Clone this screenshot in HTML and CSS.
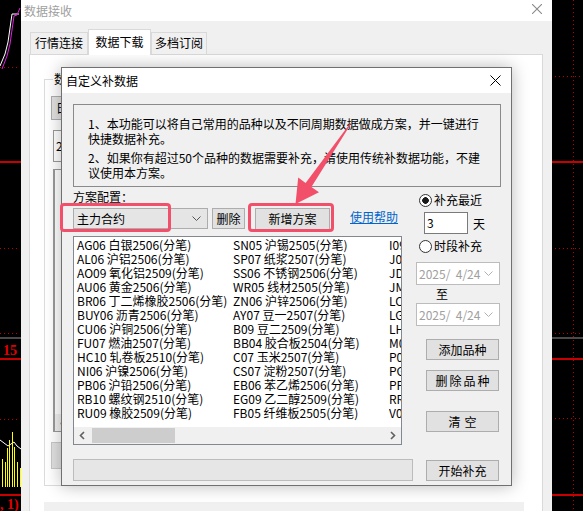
FILE: index.html
```html
<!DOCTYPE html>
<html lang="zh-CN">
<head>
<meta charset="utf-8">
<title>自定义补数据</title>
<link rel="stylesheet" href="styles.css">
</head>
<body>
<div class="desktop">
  <svg class="chart" width="583" height="511" viewBox="0 0 583 511">
    <g fill="none">
      <polyline points="0,66 5,54 8,42 12,14 19,14" stroke="#ffffff"/>
      <polyline points="2,69 7,56 10,44 14,16 17,15 20,8" stroke="#e020e0"/>
      <g stroke="#c00000" stroke-dasharray="1 3">
        <line x1="0" y1="67.5" x2="20" y2="67.5"/>
        <line x1="0" y1="248.5" x2="20" y2="248.5"/>
        <line x1="0" y1="333.5" x2="20" y2="333.5"/>
        <line x1="0" y1="419.5" x2="20" y2="419.5"/>
        <line x1="555" y1="76.5" x2="583" y2="76.5"/>
        <line x1="555" y1="248.5" x2="583" y2="248.5"/>
        <line x1="555" y1="333.5" x2="583" y2="333.5"/>
        <line x1="555" y1="418.5" x2="583" y2="418.5"/>
        <line x1="573.5" y1="0" x2="573.5" y2="511"/>
      </g>
      <g stroke="#c80000" stroke-width="2">
        <line x1="0" y1="162" x2="21" y2="162"/>
        <line x1="552" y1="162" x2="583" y2="162"/>
        <line x1="0" y1="359" x2="21" y2="359"/>
        <line x1="552" y1="359" x2="583" y2="359"/>
        <line x1="0" y1="495" x2="21" y2="495"/>
        <line x1="552" y1="495" x2="583" y2="495"/>
      </g>
      <g stroke="#4a4a4a" stroke-width="2">
        <line x1="0" y1="338" x2="21" y2="338"/>
        <line x1="552" y1="338" x2="583" y2="338"/>
      </g>
      <polyline points="0,440 4,443 8,446 11,444 14,442 17,446 21,449" stroke="#ffffff"/>
      <path d="M2.5 487V459 M5.5 487V462 M7.5 487V448 M9.5 487V440 M12.5 487V432 M14.5 487V447 M17.5 487V462 M20.5 487V468" stroke="#ffff00"/>
    </g>
    <text x="3" y="355" class="chart-num">15</text>
    <text x="0" y="509" class="chart-num">, 1)</text>
  </svg>

  <div class="backwin">
    <div class="bw-title">
      <span>数据接收</span>
      <svg class="bw-close" width="10" height="10" viewBox="0 0 10 10"><path d="M0 0L10 10M10 0L0 10" stroke="#8a8a8a" stroke-width="1.1"/></svg>
    </div>
    <div class="bw-tabs">
      <div class="tab t1">行情连接</div>
      <div class="tab t2 active">数据下载</div>
      <div class="tab t3">多档订阅</div>
    </div>
    <div class="bw-panel">
      <div class="groupbox">
        <span class="legend">数据</span>
        <div class="gb-btn">日线</div>
        <div class="gb-field">2025</div>
        <div class="gb-list"><div class="gb-scroll">‹</div></div>
        <div class="gb-btn2"></div>
      </div>
      <div class="statusbar"></div>
    </div>
  </div>

  <div class="dialog">
    <div class="dlg-title">
      <span>自定义补数据</span>
      <svg class="dlg-close" width="11" height="11" viewBox="0 0 11 11"><path d="M0.5 0.5L10.5 10.5M10.5 0.5L0.5 10.5" stroke="#000" stroke-width="1"/></svg>
    </div>
    <div class="dlg-body">
      <div class="info">
        <p>1、本功能可以将自己常用的品种以及不同周期数据做成方案，并一键进行快捷数据补充。</p>
        <p>2、如果你有超过50个品种的数据需要补充，请使用传统补数据功能，不建议使用本方案。</p>
      </div>
      <div class="main">
        <div class="left">
          <div class="label">方案配置：</div>
          <div class="combo-row">
            <div class="combo"><span>主力合约</span>
              <svg width="9" height="5" viewBox="0 0 9 5"><path d="M0.5 0.5L4.5 4.5L8.5 0.5" fill="none" stroke="#555"/></svg>
            </div>
            <div class="btn btn-del">删除</div>
            <div class="btn btn-new">新增方案</div>
            <span class="link">使用帮助</span>
          </div>
          <div class="list">
            <div class="cols">
              <span>AG06 白银2506(分笔)</span>
              <span>AL06 沪铝2506(分笔)</span>
              <span>AO09 氧化铝2509(分笔)</span>
              <span>AU06 黄金2506(分笔)</span>
              <span>BR06 丁二烯橡胶2506(分笔)</span>
              <span>BUY06 沥青2506(分笔)</span>
              <span>CU06 沪铜2506(分笔)</span>
              <span>FU07 燃油2507(分笔)</span>
              <span>HC10 轧卷板2510(分笔)</span>
              <span>NI06 沪镍2506(分笔)</span>
              <span>PB06 沪铅2506(分笔)</span>
              <span>RB10 螺纹钢2510(分笔)</span>
              <span>RU09 橡胶2509(分笔)</span>
              <span>SN05 沪锡2505(分笔)</span>
              <span>SP07 纸浆2507(分笔)</span>
              <span>SS06 不锈钢2506(分笔)</span>
              <span>WR05 线材2505(分笔)</span>
              <span>ZN06 沪锌2506(分笔)</span>
              <span>AY07 豆一2507(分笔)</span>
              <span>B09 豆二2509(分笔)</span>
              <span>BB04 胶合板2504(分笔)</span>
              <span>C07 玉米2507(分笔)</span>
              <span>CS07 淀粉2507(分笔)</span>
              <span>EB06 苯乙烯2506(分笔)</span>
              <span>EG09 乙二醇2509(分笔)</span>
              <span>FB05 纤维板2505(分笔)</span>
              <span class="clip">I09</span>
              <span class="clip">J09</span>
              <span class="clip">JD06</span>
              <span class="clip">JM09</span>
              <span class="clip">LC07</span>
              <span class="clip">LG07</span>
              <span class="clip">LH09</span>
              <span class="clip">M09</span>
              <span class="clip">P09</span>
              <span class="clip">PG06</span>
              <span class="clip">PP09</span>
              <span class="clip">RR07</span>
              <span class="clip">V09</span>
            </div>
            <div class="hscroll">
              <svg class="arr" width="17" height="15" viewBox="0 0 17 15"><path d="M10 4L6.5 7.5L10 11" fill="none" stroke="#606060" stroke-width="1.6"/></svg>
              <div class="thumb"></div>
              <svg class="arr arr-r" width="17" height="15" viewBox="0 0 17 15"><path d="M7 4L10.5 7.5L7 11" fill="none" stroke="#606060" stroke-width="1.6"/></svg>
            </div>
          </div>
        </div>
        <div class="right">
          <div class="radio checked"><i></i><span>补充最近</span></div>
          <div class="days"><div class="input">3</div><span>天</span></div>
          <div class="radio r2"><i></i><span>时段补充</span></div>
          <div class="date d1"><span>2025/  4/24</span>
            <svg width="9" height="5" viewBox="0 0 9 5"><path d="M0.5 0.5L4.5 4.5L8.5 0.5" fill="none" stroke="#b0b0b0"/></svg>
          </div>
          <div class="to">至</div>
          <div class="date d2"><span>2025/  4/24</span>
            <svg width="9" height="5" viewBox="0 0 9 5"><path d="M0.5 0.5L4.5 4.5L8.5 0.5" fill="none" stroke="#b0b0b0"/></svg>
          </div>
          <div class="btn rbtn b-add">添加品种</div>
          <div class="btn rbtn b-del">删除品种</div>
          <div class="btn rbtn b-clear">清空</div>
        </div>
        <div class="progress"></div>
        <div class="btn rbtn b-start">开始补充</div>
      </div>
    </div>
  </div>

  <div class="mark mark-combo"></div>
  <div class="mark mark-new"></div>
  <svg class="arrow" width="583" height="511" viewBox="0 0 583 511">
    <polygon points="350.6,124.6 311.4,186.9 319,192.2 295.5,204 298.2,177.6 305.6,182.9 349.6,124" fill="#f2506a"/>
  </svg>
</div>
</body>
</html>
```

FILE: styles.css
```css
* { box-sizing: border-box; margin: 0; padding: 0; }
html, body { width: 583px; height: 511px; overflow: hidden; }
body {
  background: #000;
  font-family: "Noto Sans CJK SC", "Noto Sans", sans-serif;
  font-size: 12px;
  color: #000;
}
.desktop { position: relative; width: 583px; height: 511px; overflow: hidden; }
.chart { position: absolute; left: 0; top: 0; }
.chart-num { fill: #e00000; font-family: "Liberation Serif", serif; font-weight: bold; font-size: 14px; }

/* back window */
.backwin {
  position: absolute; left: 21px; top: 0; width: 531px; height: 511px;
  background: #f0f0f0;
}
.bw-title {
  height: 21px; background: #fff; display: flex; align-items: center;
  padding-left: 3px; color: #a0a0a0; line-height: 17px;
}
.bw-close { margin-left: auto; margin-right: 10px; margin-top: -4px; }
.bw-tabs {
  display: flex; align-items: flex-end; height: 25px;
  margin: 8px 0 0 9px; position: relative; z-index: 1;
}
.tab {
  height: 22px; border: 1px solid #d9d9d9; border-bottom: none;
  background: #f0f0f0; text-align: center; line-height: 20px;
}
.t1 { width: 58px; }
.t2 { width: 63px; }
.t3 { width: 56px; }
.tab.active { height: 26px; background: #fff; margin-bottom: -1px; line-height: 24px; }
.bw-panel {
  margin-left: 8px; width: 514px; height: 470px;
  background: #fff; border: 1px solid #d9d9d9;
}
.groupbox {
  position: relative; margin: 24px 0 0 14px; width: 463px; height: 407px;
  border: 1px solid #dcdcdc; padding-left: 6px;
}
.legend {
  position: absolute; left: 8px; top: -9px; background: #fff; padding: 0 1px; line-height: 16px;
}
.gb-btn {
  margin-top: 16px; width: 60px; height: 24px; background: #e1e1e1;
  border: 1px solid #adadad; line-height: 22px; padding-left: 4px;
}
.gb-field {
  margin: 10px 0 0 2px; width: 100px; height: 32px; border: 1px solid #9a9a9a;
  line-height: 30px; padding-left: 2px;
}
.gb-list {
  margin: 7px 0 0 2px; width: 200px; height: 263px; border: 1px solid #9a9a9a;
  border-left-width: 2px; display: flex; flex-direction: column; justify-content: flex-end;
}
.gb-scroll { height: 17px; background: #f0f0f0; color: #606060; padding-left: 5px; line-height: 16px; }
.gb-btn2 {
  margin-top: 10px; width: 60px; height: 27px; background: #e1e1e1; border: 1px solid #c8c8c8;
}
.statusbar { margin: 16px 0 0 14px; width: 480px; height: 20px; background: #f0f0f0; }

/* dialog */
.dialog {
  position: absolute; left: 61px; top: 67px; width: 451px; height: 419px;
  background: #f0f0f0; border: 1px solid #707070;
  box-shadow: 0 0 16px rgba(0, 0, 0, 0.28);
}
.dlg-title {
  height: 25px; background: #fff; display: flex; align-items: center; padding: 0 10px 0 4px;
}
.dlg-close { margin-left: auto; }
.dlg-body { padding: 11px 10px 0 11px; }
.info {
  width: 428px; height: 83px; border: 1px solid #8a8a8a;
  padding: 11px 16px 0 14px; line-height: 15px;
}
.info p + p { margin-top: 4px; }
.main {
  margin-top: 3px; display: grid;
  grid-template-columns: 340px 85px; grid-template-rows: 255px 22px;
  column-gap: 3px; row-gap: 14px;
}
.label { height: 14px; line-height: 14px; }
.combo-row { margin-top: 4px; display: flex; align-items: flex-start; height: 22px; }
.combo {
  width: 135px; height: 21px; background: #e5e5e5; border: 1px solid #acacac;
  padding: 0 6px 0 3px; line-height: 19px; display: flex; align-items: center; justify-content: space-between;
}
.btn {
  background: #e1e1e1; border: 1px solid #adadad; text-align: center;
}
.btn-del { margin-left: 4px; width: 33px; height: 21px; line-height: 19px; }
.btn-new { margin-left: 10px; width: 75px; height: 22px; line-height: 20px; }
.link { margin-left: 20px; color: #0066cc; text-decoration: underline; line-height: 18px; }
.list {
  margin-top: 6px; width: 329px; height: 209px; border: 1px solid #828790;
  background: #fff; display: flex; flex-direction: column;
}
.cols {
  flex: 1; overflow: hidden; display: grid; grid-auto-flow: column;
  grid-template-rows: repeat(13, 14px); grid-auto-columns: 156px;
  padding: 1px 0 0 3px; line-height: 14px; white-space: nowrap;
}
.cols .clip { width: 12px; overflow: hidden; }
.hscroll { height: 17px; background: #f0f0f0; display: flex; align-items: center; }
.arr { flex: none; }
.thumb { margin-left: 1px; width: 83px; height: 15px; background: #cdcdcd; }
.arr-r { margin-left: auto; }

.right { display: flex; flex-direction: column; align-items: flex-start; }
.radio { display: flex; align-items: center; height: 14px; padding-left: 3px; margin-top: 3px; line-height: 14px; }
.radio i {
  width: 13px; height: 13px; border: 1px solid #333; border-radius: 50%;
  background: #fff; margin-right: 2px;
}
.radio.checked i { background: radial-gradient(circle, #1a1a1a 0 3px, #fff 3.6px); }
.radio.r2 { margin-top: 5px; }
.days { margin: 5px 0 0 8px; display: flex; align-items: center; height: 22px; }
.input {
  width: 44px; height: 22px; background: #fff; border: 1px solid #7a7a7a;
  padding-left: 2px; line-height: 20px;
}
.days span { margin-left: 5px; }
.date {
  width: 84px; height: 23px; background: #fff; border: 1px solid #bcbcbc;
  color: #a0a0a0; padding: 0 6px 0 2px; display: flex; align-items: center;
  justify-content: space-between; white-space: pre;
}
.d1 { margin-top: 9px; }
.to { margin: 2px 0 0 20px; height: 14px; line-height: 14px; }
.d2 { margin-top: 2px; }
.rbtn { margin-left: 10px; width: 73px; height: 21px; line-height: 19px; }
.b-add { margin-top: 13px; }
.b-del { margin-top: 10px; letter-spacing: 2px; padding-left: 2px; }
.b-clear { margin-top: 20px; letter-spacing: 4px; padding-left: 4px; }
.progress { width: 340px; height: 22px; background: #e6e6e6; border: 1px solid #bcbcbc; }
.b-start { margin-top: 1px; }

/* annotations */
.mark {
  position: absolute; border: 3px solid #f2506a; border-radius: 4px;
}
.mark-combo { left: 60px; top: 203px; width: 111px; height: 29px; }
.mark-new { left: 248px; top: 203px; width: 86px; height: 29px; }
.arrow { position: absolute; left: 0; top: 0; pointer-events: none; }
```
